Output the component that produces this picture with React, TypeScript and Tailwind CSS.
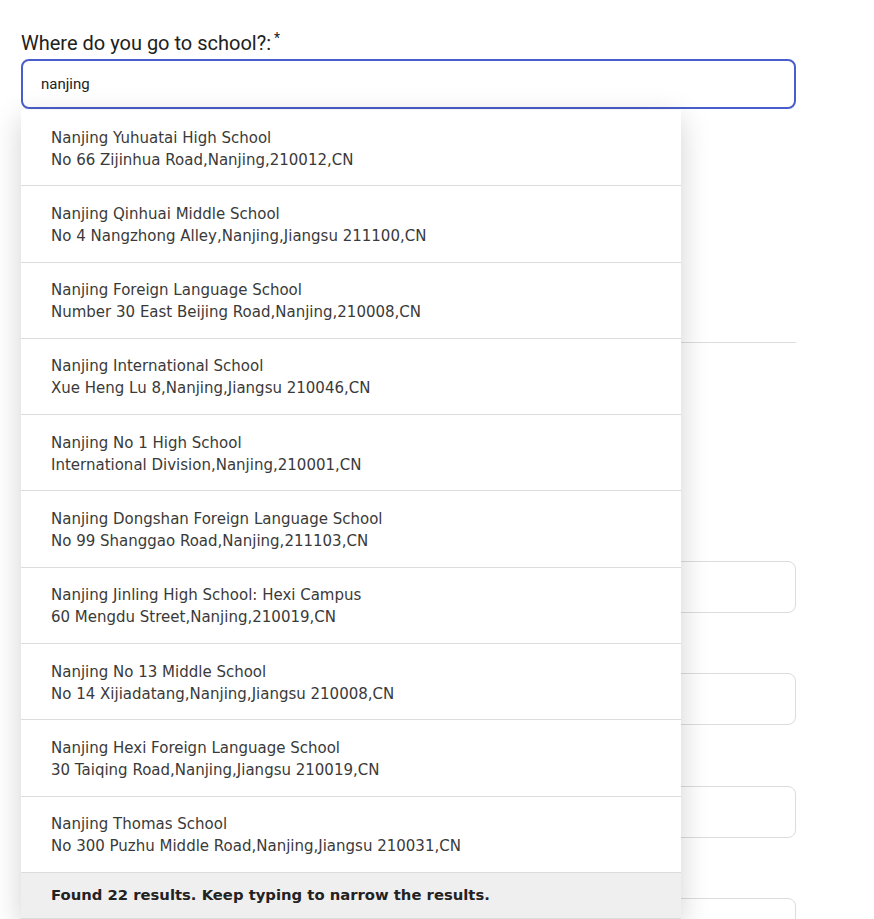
import React from "react";

const items: [string, string][] = [
  ["Nanjing Yuhuatai High School", "No 66 Zijinhua Road,Nanjing,210012,CN"],
  ["Nanjing Qinhuai Middle School", "No 4 Nangzhong Alley,Nanjing,Jiangsu 211100,CN"],
  ["Nanjing Foreign Language School", "Number 30 East Beijing Road,Nanjing,210008,CN"],
  ["Nanjing International School", "Xue Heng Lu 8,Nanjing,Jiangsu 210046,CN"],
  ["Nanjing No 1 High School", "International Division,Nanjing,210001,CN"],
  ["Nanjing Dongshan Foreign Language School", "No 99 Shanggao Road,Nanjing,211103,CN"],
  ["Nanjing Jinling High School: Hexi Campus", "60 Mengdu Street,Nanjing,210019,CN"],
  ["Nanjing No 13 Middle School", "No 14 Xijiadatang,Nanjing,Jiangsu 210008,CN"],
  ["Nanjing Hexi Foreign Language School", "30 Taiqing Road,Nanjing,Jiangsu 210019,CN"],
  ["Nanjing Thomas School", "No 300 Puzhu Middle Road,Nanjing,Jiangsu 210031,CN"],
];

export default function App() {
  return (
    <div className="relative w-[874px] h-[919px] overflow-hidden bg-white">
      <div className="pl-[21px] pt-[30px] w-[796px]">
        <label className="block text-[20px] leading-[26px] text-[#212121] font-['Roboto',sans-serif]">
          Where do you go to school?:
          <sup className="ml-[3px] text-[14px] top-[-0.5em]">*</sup>
        </label>
        <div className="mt-[3px] h-[50px] rounded-[8px] border-2 border-[#4a5ecb] flex items-center pl-[18px] text-[15px] text-[#222] font-['Roboto',sans-serif]">
          nanjing
        </div>
        <div className="h-[233px]" />
        <div className="h-px bg-[#dcdcdc]" />
        <div className="h-[218px]" />
        <div className="h-[52px] rounded-[8px] border border-[#dcdcdc]" />
        <div className="h-[60px]" />
        <div className="h-[52px] rounded-[8px] border border-[#dcdcdc]" />
        <div className="h-[61px]" />
        <div className="h-[52px] rounded-[8px] border border-[#dcdcdc]" />
        <div className="h-[60px]" />
        <div className="h-[52px] rounded-[8px] border border-[#dcdcdc]" />
      </div>

      <div className="absolute left-[21px] top-[110px] w-[660px] bg-white shadow-[0_8px_28px_rgba(0,0,0,0.18)] font-['DejaVu_Sans',sans-serif]">
        {items.map(([name, addr]) => (
          <div
            key={name}
            className="pl-[30px] pr-4 pt-[16.6px] pb-[14.7px] border-b border-[#dcdcdc] text-[15px] leading-[22px] text-[#3a3a3a]"
          >
            <div>{name}</div>
            <div>{addr}</div>
          </div>
        ))}
        <div className="h-[46px] pl-[30px] flex items-center bg-[#efefef] border-b border-[#dcdcdc] text-[14.8px] font-bold text-[#222]">
          Found 22 results. Keep typing to narrow the results.
        </div>
      </div>
    </div>
  );
}
